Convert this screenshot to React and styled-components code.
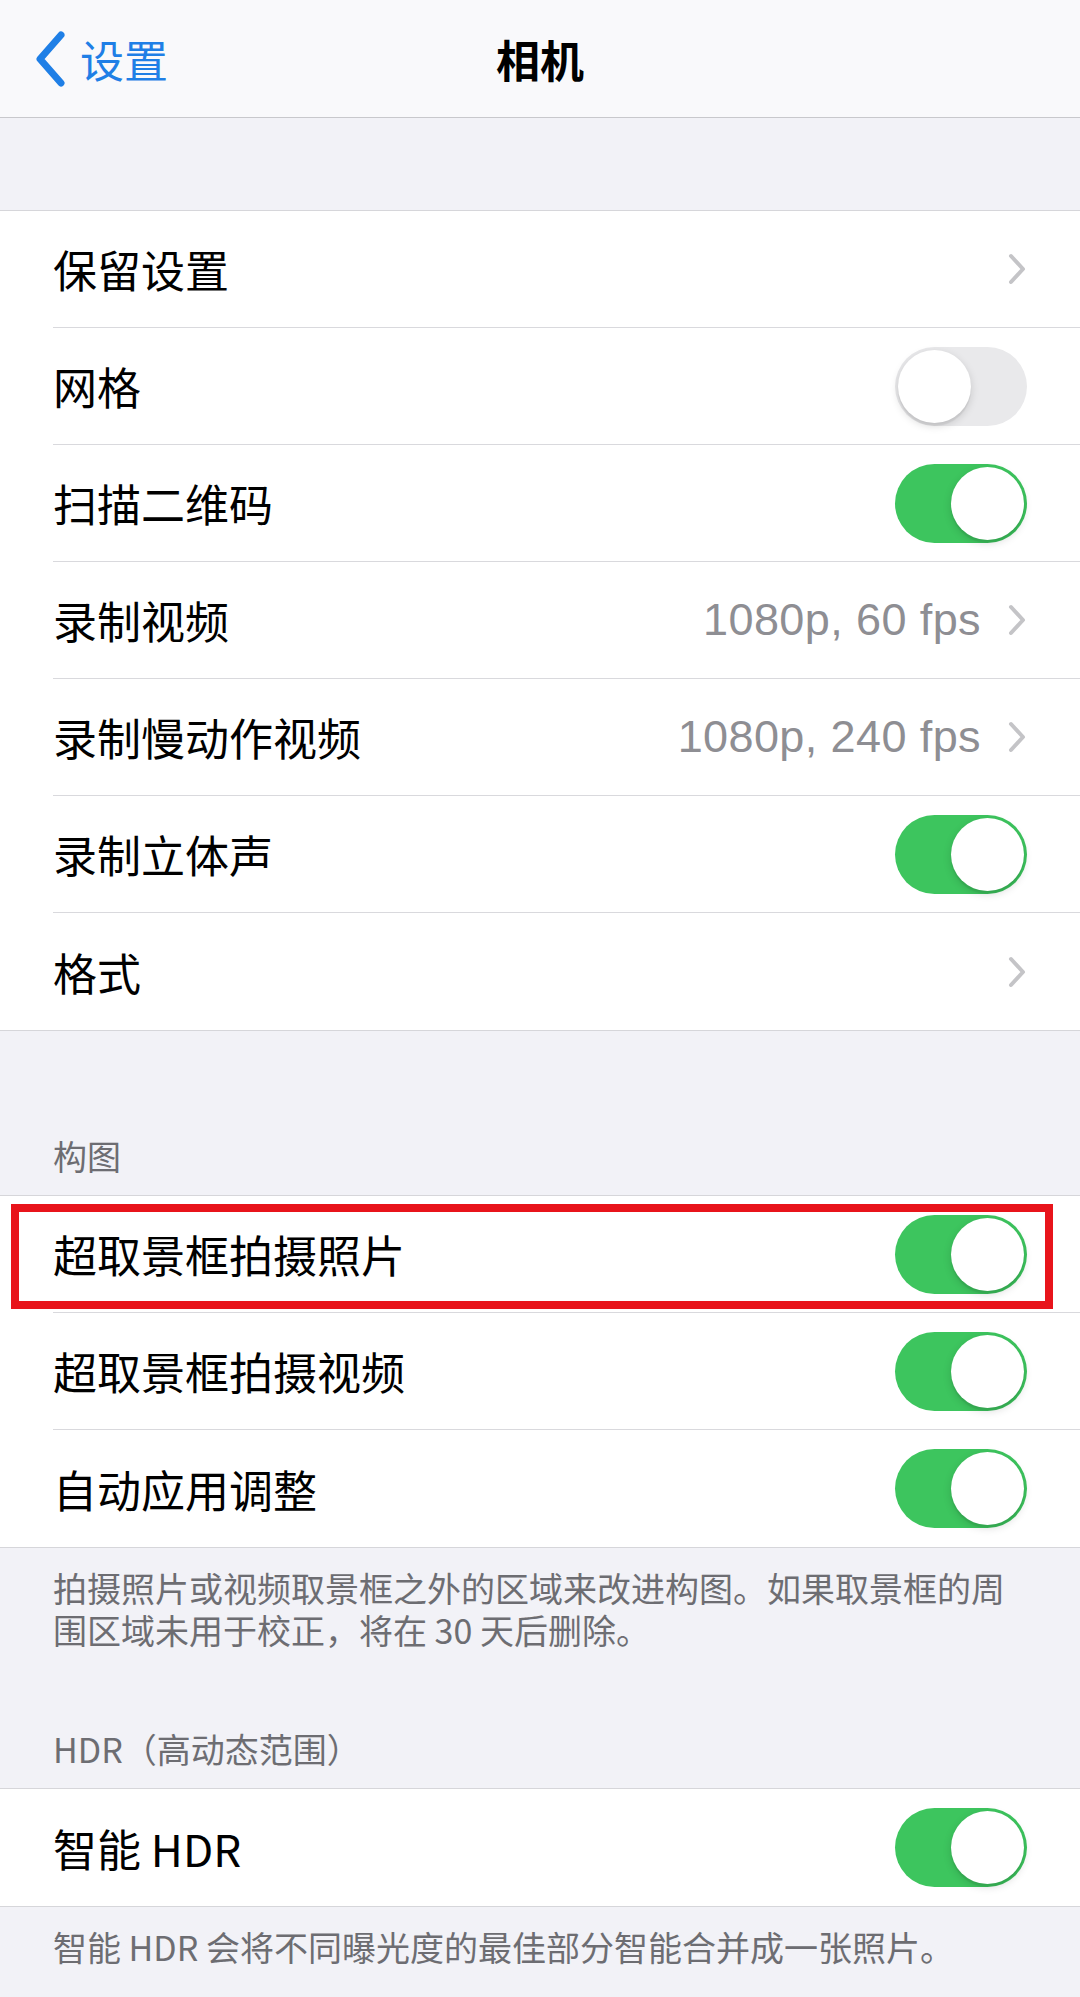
import React from "react";
import styled, { createGlobalStyle } from "styled-components";

const Global = createGlobalStyle`
  html, body { margin: 0; padding: 0; background: #f2f2f7; }
  body { font-family: "Noto Sans CJK SC", "Liberation Sans", sans-serif; }
  * { box-sizing: border-box; }
`;

const Page = styled.div`
  width: 1080px;
  min-height: 1997px;
  background: #f2f2f7;
  display: flex;
  flex-direction: column;
`;

const NavBar = styled.header`
  height: 118px;
  background: #f9f9fb;
  border-bottom: 1.5px solid #c8c8cc;
  display: grid;
  grid-template-columns: 1fr auto 1fr;
  align-items: center;
`;

const Back = styled.div`
  display: flex;
  align-items: center;
  gap: 14px;
  padding-left: 34px;
  color: #1f7fe6;
  font-size: 44px;
  line-height: 1;
`;

const Title = styled.div`
  font-size: 44px;
  font-weight: 700;
  color: #000;
  line-height: 1;
`;

const Group = styled.section`
  background: #fff;
  border-top: 1.5px solid #d6d6da;
  border-bottom: 1.5px solid #d6d6da;
  margin-top: ${(p) => p.$mt || 0}px;
`;

const Row = styled.div`
  position: relative;
  height: 117px;
  display: flex;
  align-items: center;
  padding-left: 53px;
`;

const RowInner = styled.div`
  flex: 1;
  height: 100%;
  display: flex;
  align-items: center;
  padding-right: 53px;
  border-bottom: ${(p) => (p.$last ? "none" : "1.5px solid #d9d9dd")};
`;

const Label = styled.div`
  flex: 1;
  font-size: 44px;
  color: #000;
  line-height: 1;
`;

const Value = styled.div`
  font-family: "Liberation Sans", "Noto Sans CJK SC", sans-serif;
  font-size: 45px;
  color: #8e8e93;
  margin-right: 26px;
  letter-spacing: 0.4px;
`;

const Track = styled.div`
  width: 132px;
  height: 79px;
  border-radius: 40px;
  background: ${(p) => (p.$on ? "#3dc55e" : "#e9e9eb")};
  position: relative;
  flex-shrink: 0;
`;

const Knob = styled.div`
  position: absolute;
  top: 3px;
  left: ${(p) => (p.$on ? "56px" : "3px")};
  width: 73px;
  height: 73px;
  border-radius: 50%;
  background: #fff;
  box-shadow: 0 3px 8px rgba(0, 0, 0, 0.15), 0 3px 1px rgba(0, 0, 0, 0.06);
`;

const Header = styled.div`
  padding: ${(p) => p.$pt}px 53px 18px;
  font-size: 34px;
  line-height: 42px;
  color: #6d6d72;
`;

const Footer = styled.div`
  padding: 19px 53px 0;
  font-size: 34px;
  line-height: 42px;
  color: #6d6d72;
`;

const Highlight = styled.div`
  position: absolute;
  left: 11px;
  right: 27px;
  top: 8px;
  bottom: 4px;
  border: 8px solid #e8141b;
  pointer-events: none;
`;

const Chevron = () => (
  <svg width="20" height="32" viewBox="0 0 20 32">
    <path d="M4 3 L16 16 L4 29" fill="none" stroke="#c4c4c7" strokeWidth="4" strokeLinecap="round" strokeLinejoin="round" />
  </svg>
);

const BackChevron = () => (
  <svg width="32" height="56" viewBox="0 0 32 56">
    <path d="M27 4 L6 28 L27 52" fill="none" stroke="#1f7fe6" strokeWidth="7" strokeLinecap="round" strokeLinejoin="round" />
  </svg>
);

const Toggle = ({ on }) => (
  <Track $on={on}>
    <Knob $on={on} />
  </Track>
);

const SettingRow = ({ label, value, chevron, toggle, last, highlight }) => (
  <Row>
    <RowInner $last={last}>
      <Label>{label}</Label>
      {value && <Value>{value}</Value>}
      {chevron && <Chevron />}
      {toggle !== undefined && <Toggle on={toggle} />}
    </RowInner>
    {highlight && <Highlight />}
  </Row>
);

export default function App() {
  return (
    <Page>
      <Global />
      <NavBar>
        <Back>
          <BackChevron />
          <span>设置</span>
        </Back>
        <Title>相机</Title>
        <div />
      </NavBar>

      <Group $mt={92}>
        <SettingRow label="保留设置" chevron />
        <SettingRow label="网格" toggle={false} />
        <SettingRow label="扫描二维码" toggle={true} />
        <SettingRow label="录制视频" value="1080p, 60 fps" chevron />
        <SettingRow label="录制慢动作视频" value="1080p, 240 fps" chevron />
        <SettingRow label="录制立体声" toggle={true} />
        <SettingRow label="格式" chevron last />
      </Group>

      <Header $pt={104}>构图</Header>
      <Group>
        <SettingRow label="超取景框拍摄照片" toggle={true} highlight />
        <SettingRow label="超取景框拍摄视频" toggle={true} />
        <SettingRow label="自动应用调整" toggle={true} last />
      </Group>
      <Footer>
        拍摄照片或视频取景框之外的区域来改进构图。如果取景框的周围区域未用于校正，将在 30 天后删除。
      </Footer>

      <Header $pt={77}>HDR（高动态范围）</Header>
      <Group>
        <SettingRow label="智能 HDR" toggle={true} last />
      </Group>
      <Footer>智能 HDR 会将不同曝光度的最佳部分智能合并成一张照片。</Footer>
    </Page>
  );
}
